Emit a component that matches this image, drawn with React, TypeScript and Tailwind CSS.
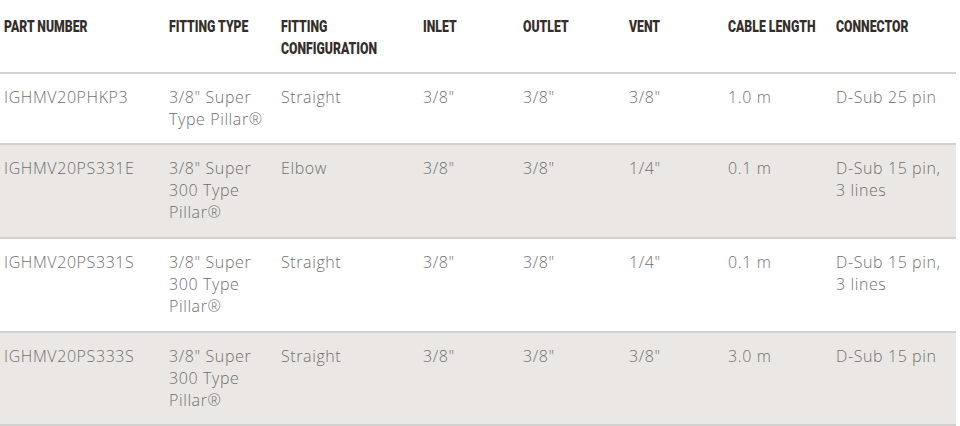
const headers = [
  ["PART NUMBER"],
  ["FITTING TYPE"],
  ["FITTING", "CONFIGURATION"],
  ["INLET"],
  ["OUTLET"],
  ["VENT"],
  ["CABLE LENGTH"],
  ["CONNECTOR"],
];

const rows: { cells: string[][]; shaded: boolean; h: string }[] = [
  {
    shaded: false,
    h: "h-[71px]",
    cells: [
      ["IGHMV20PHKP3"],
      ['3/8" Super', "Type Pillar®"],
      ["Straight"],
      ['3/8"'],
      ['3/8"'],
      ['3/8"'],
      ["1.0 m"],
      ["D-Sub 25 pin"],
    ],
  },
  {
    shaded: true,
    h: "h-[94px]",
    cells: [
      ["IGHMV20PS331E"],
      ['3/8" Super', "300 Type", "Pillar®"],
      ["Elbow"],
      ['3/8"'],
      ['3/8"'],
      ['1/4"'],
      ["0.1 m"],
      ["D-Sub 15 pin,", "3 lines"],
    ],
  },
  {
    shaded: false,
    h: "h-[94px]",
    cells: [
      ["IGHMV20PS331S"],
      ['3/8" Super', "300 Type", "Pillar®"],
      ["Straight"],
      ['3/8"'],
      ['3/8"'],
      ['1/4"'],
      ["0.1 m"],
      ["D-Sub 15 pin,", "3 lines"],
    ],
  },
  {
    shaded: true,
    h: "h-[93px]",
    cells: [
      ["IGHMV20PS333S"],
      ['3/8" Super', "300 Type", "Pillar®"],
      ["Straight"],
      ['3/8"'],
      ['3/8"'],
      ['3/8"'],
      ["3.0 m"],
      ["D-Sub 15 pin"],
    ],
  },
];

const cols = "grid grid-cols-[165px_112px_142px_100px_106px_99px_108px_124px]";

const App = () => {
  return (
    <div className="w-[960px] h-[426px] bg-white overflow-hidden">
      <div className="w-[956px]">
        {/* header uses a squeezed Roboto to get the condensed look */}
        <div
          className={`${cols} h-[72px] pt-[15px] text-[#352d2a] text-[17px] leading-[22px] font-black font-[Roboto,sans-serif]`}
        >
          {headers.map((h, i) => (
            <div key={i} className="pl-1">
              {h.map((line) => (
                <div key={line} className="whitespace-nowrap origin-left scale-x-[0.72]">
                  {line}
                </div>
              ))}
            </div>
          ))}
        </div>
        {rows.map((r, i) => (
          <div
            key={i}
            className={`${cols} ${r.h} border-t-2 border-[#d3d1cf] pt-[12px] text-[16px] leading-[22px] tracking-[0.6px] text-[#6f6f6f] font-light font-['Open_Sans',sans-serif] ${
              r.shaded ? "bg-[#ebe7e4]" : "bg-white"
            }`}
          >
            {r.cells.map((c, j) => (
              <div key={j} className="pl-1">
                {c.map((line) => (
                  <div key={line} className="whitespace-nowrap">{line}</div>
                ))}
              </div>
            ))}
          </div>
        ))}
        <div className="border-t-2 border-[#d3d1cf]" />
      </div>
    </div>
  );
};

export default App;
